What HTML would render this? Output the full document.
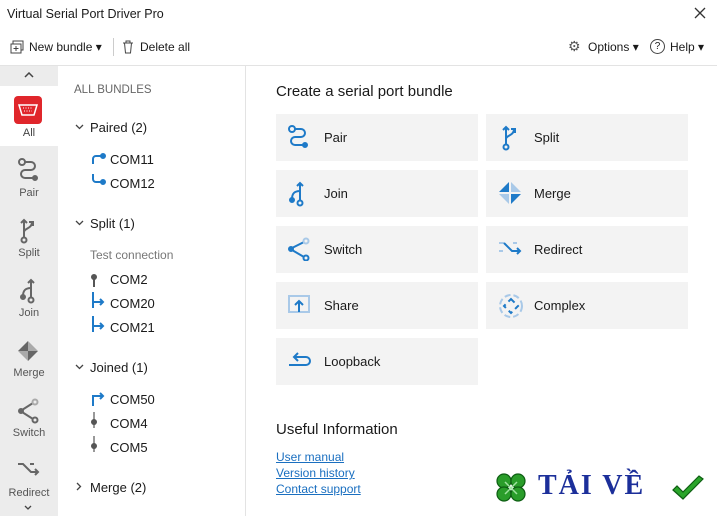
<!DOCTYPE html><html><head><meta charset="utf-8"><style>
*{margin:0;padding:0;box-sizing:border-box}
body{width:717px;height:516px;overflow:hidden;background:#fff;font-family:"Liberation Sans",sans-serif;color:#1a1a1a;position:relative;font-size:13px}
.a{position:absolute;white-space:nowrap}
.tile{position:absolute;width:202px;height:47px;background:#f3f3f3}
.tile span{position:absolute;left:48px;top:16px;font-size:13px}
.tile svg{position:absolute;left:12px;top:11px}
.side{position:absolute;left:0;width:58px;text-align:center;font-size:11px;color:#555}
.com{font-size:13px}
a{color:#1a6fc0;text-decoration:underline}
.chev{position:absolute}
</style></head><body>
<div class="a" style="left:7px;top:7px;font-size:12.5px">Virtual Serial Port Driver Pro</div>
<svg class="a" style="left:694px;top:7px" width="12" height="12" stroke="#333" stroke-width="1.3"><path d="M1 1l10 10M11 1L1 11"/></svg>
<svg class="a" style="left:10px;top:40px" width="14" height="14"><rect x="3" y="1" width="10" height="9" fill="none" stroke="#444"/><rect x="1" y="4" width="10" height="9" fill="#fff" stroke="#444"/><path d="M6 6v5M3.5 8.5h5" stroke="#444"/></svg>
<div class="a" style="left:29px;top:40px;font-size:12px">New bundle ▾</div>
<div class="a" style="left:113px;top:38px;width:1px;height:18px;background:#ccc"></div>
<svg class="a" style="left:122px;top:40px" width="12" height="14"><path d="M1 3h10M4 3V1h4v2M2.5 3l1 10h5l1-10" fill="none" stroke="#444"/></svg>
<div class="a" style="left:140px;top:40px;font-size:12px">Delete all</div>
<div class="a" style="left:568px;top:38px;font-size:14px;color:#555">⚙</div>
<div class="a" style="left:588px;top:40px;font-size:12px">Options ▾</div>
<div class="a" style="left:650px;top:39px;width:15px;height:15px;border:1px solid #444;border-radius:50%;font-size:10px;text-align:center;line-height:13px">?</div>
<div class="a" style="left:670px;top:40px;font-size:12px">Help ▾</div>
<div class="a" style="left:0;top:65px;width:717px;height:1px;background:#e3e3e3"></div>
<div class="a" style="left:0;top:66px;width:58px;height:450px;background:#ececec"></div>
<div class="a" style="left:0;top:86px;width:58px;height:60px;background:#fff"></div>
<svg class="chev" style="left:24px;top:72px" width="10" height="6" fill="none" stroke="#444" stroke-width="1.5"><path d="M1 5l4-4 4 4"/></svg>
<div class="a" style="left:14px;top:96px;width:28px;height:28px;background:#e0262b;border-radius:4px"></div>
<svg class="a" style="left:17px;top:103px" width="22" height="14"><path d="M2 2h18l-3 10H5z" fill="none" stroke="#fff" stroke-width="1.5"/><path d="M6 5h10M7 8h8" stroke="#fff" stroke-dasharray="1 1.5"/></svg>
<div class="side" style="top:127px;color:#444">All</div>
<svg class="a" style="left:17px;top:158px" width="22" height="24" fill="none" stroke="#666" stroke-width="2"><circle cx="5" cy="4" r="3"/><path d="M8 4h6a4 4 0 0 1 0 8H8a4 4 0 0 0 0 8h8"/><circle cx="18" cy="20" r="2" fill="#666"/></svg>
<div class="side" style="top:187px">Pair</div>
<svg class="a" style="left:18px;top:218px" width="22" height="26" fill="none" stroke="#666" stroke-width="2"><path d="M6 20V2M3 5l3-3 3 3M6 14c0-4 8-3 8-10M11 4h4v4"/><circle cx="6" cy="22" r="2.5"/></svg>
<div class="side" style="top:247px">Split</div>
<svg class="a" style="left:18px;top:278px" width="22" height="26" fill="none" stroke="#666" stroke-width="2"><path d="M13 20V2M10 5l3-3 3 3M13 10c-6 0-8 3-8 8"/><circle cx="13" cy="22" r="2.5"/><circle cx="5" cy="19" r="2" fill="#666"/></svg>
<div class="side" style="top:307px">Join</div>
<svg class="a" style="left:17px;top:340px" width="22" height="22"><path d="M11 1L1 11h10z" fill="#666"/><path d="M11 21l10-10H11z" fill="#666"/><path d="M11 1l10 10H11zM11 21L1 11h10z" fill="#aaa"/></svg>
<div class="side" style="top:367px">Merge</div>
<svg class="a" style="left:17px;top:398px" width="24" height="26" fill="none" stroke="#666" stroke-width="2"><circle cx="4" cy="13" r="2" fill="#666"/><path d="M5 12l11-7M5 14l11 7"/><circle cx="18" cy="4" r="2.5" stroke="#aaa"/><circle cx="18" cy="22" r="2.5"/></svg>
<div class="side" style="top:427px">Switch</div>
<svg class="a" style="left:17px;top:460px" width="24" height="16" fill="none" stroke="#666" stroke-width="2"><path d="M1 4h5l8 8h7M18 9l3 3-3 3M13 4h4"/></svg>
<div class="side" style="top:487px">Redirect</div>
<svg class="chev" style="left:24px;top:505px" width="8" height="5" fill="none" stroke="#444" stroke-width="1.3"><path d="M1 1l3 3 3-3"/></svg>
<div class="a" style="left:245px;top:66px;width:1px;height:450px;background:#e3e3e3"></div>
<div class="a" style="left:74px;top:84px;font-size:11.5px;color:#666">ALL BUNDLES</div>
<svg class="chev" style="left:75px;top:124px" width="9" height="6" fill="none" stroke="#444" stroke-width="1.3"><path d="M1 1l3.5 3.5L8 1"/></svg><div class="a" style="left:90px;top:120px">Paired (2)</div>
<svg class="a" style="left:92px;top:152px" width="14" height="12" fill="none" stroke="#1e7ac8" stroke-width="2"><path d="M1 12V7a3 3 0 0 1 3-3h8"/><circle cx="11" cy="4" r="2" fill="#1e7ac8"/></svg><div class="a com" style="left:110px;top:152px">COM11</div>
<svg class="a" style="left:92px;top:174px" width="14" height="12" fill="none" stroke="#1e7ac8" stroke-width="2"><path d="M1 0v5a3 3 0 0 0 3 3h8"/><circle cx="11" cy="8" r="2" fill="#1e7ac8"/></svg><div class="a com" style="left:110px;top:176px">COM12</div>
<svg class="chev" style="left:75px;top:220px" width="9" height="6" fill="none" stroke="#444" stroke-width="1.3"><path d="M1 1l3.5 3.5L8 1"/></svg><div class="a" style="left:90px;top:216px">Split (1)</div>
<div class="a" style="left:90px;top:248px;font-size:12px;color:#777">Test connection</div>
<svg class="a" style="left:90px;top:273px" width="10" height="14"><circle cx="4" cy="4" r="3" fill="#555"/><path d="M4 6v8" stroke="#555" stroke-width="2"/></svg><div class="a com" style="left:110px;top:272px">COM2</div>
<svg class="a" style="left:92px;top:292px" width="14" height="16" fill="none" stroke="#1e7ac8" stroke-width="2"><path d="M1 0v16M1 10h10M8 7l3 3-3 3"/></svg><div class="a com" style="left:110px;top:296px">COM20</div>
<svg class="a" style="left:92px;top:316px" width="14" height="16" fill="none" stroke="#1e7ac8" stroke-width="2"><path d="M1 0v16M1 10h10M8 7l3 3-3 3"/></svg><div class="a com" style="left:110px;top:320px">COM21</div>
<svg class="chev" style="left:75px;top:364px" width="9" height="6" fill="none" stroke="#444" stroke-width="1.3"><path d="M1 1l3.5 3.5L8 1"/></svg><div class="a" style="left:90px;top:360px">Joined (1)</div>
<svg class="a" style="left:92px;top:390px" width="14" height="16" fill="none" stroke="#1e7ac8" stroke-width="2"><path d="M1 16V6h10M8 3l3 3-3 3"/></svg><div class="a com" style="left:110px;top:392px">COM50</div>
<svg class="a" style="left:90px;top:412px" width="10" height="16"><path d="M4 0v16" stroke="#999" stroke-width="2"/><circle cx="4" cy="10" r="3" fill="#555"/></svg><div class="a com" style="left:110px;top:416px">COM4</div>
<svg class="a" style="left:90px;top:436px" width="10" height="16"><path d="M4 0v16" stroke="#999" stroke-width="2"/><circle cx="4" cy="10" r="3" fill="#555"/></svg><div class="a com" style="left:110px;top:440px">COM5</div>
<svg class="chev" style="left:76px;top:482px" width="6" height="9" fill="none" stroke="#444" stroke-width="1.3"><path d="M1 1l3.5 3.5L1 8"/></svg><div class="a" style="left:90px;top:480px">Merge (2)</div>
<div class="a" style="left:276px;top:83px;font-size:15px">Create a serial port bundle</div>
<div class="tile" style="left:276px;top:114px"><svg width="24" height="24" fill="none" stroke="#1e7ac8" stroke-width="2"><circle cx="4" cy="4" r="3"/><path d="M7 4h6a4 4 0 0 1 0 8H7a4 4 0 0 0 0 8h9"/><circle cx="17" cy="20" r="2" fill="#1e7ac8"/></svg><span>Pair</span></div>
<div class="tile" style="left:486px;top:114px"><svg width="24" height="26" fill="none" stroke="#1e7ac8" stroke-width="2"><path d="M8 20V2M5 5l3-3 3 3M8 14c0-4 8-3 8-10M13 4h4v4"/><circle cx="8" cy="22" r="2.5"/></svg><span>Split</span></div>
<div class="tile" style="left:276px;top:170px"><svg width="24" height="26" fill="none" stroke="#1e7ac8" stroke-width="2"><path d="M12 19V2M9 5l3-3 3 3M12 10c-6 0-8 3-8 8"/><circle cx="12" cy="22" r="2.5"/><circle cx="4" cy="19" r="2" fill="#1e7ac8"/></svg><span>Join</span></div>
<div class="tile" style="left:486px;top:170px"><svg width="24" height="24"><path d="M11 1L1 11h10zM13 23l10-10H13z" fill="#1e7ac8"/><path d="M13 1l10 10H13zM11 23L1 13h10z" fill="#a9c9e8"/></svg><span>Merge</span></div>
<div class="tile" style="left:276px;top:226px"><svg width="24" height="24" fill="none" stroke="#1e7ac8" stroke-width="2"><circle cx="3" cy="12" r="2" fill="#1e7ac8"/><path d="M4 11l12-6M4 13l12 7"/><circle cx="18" cy="4" r="2.5" stroke="#a9c9e8"/><circle cx="18" cy="21" r="2.5"/></svg><span>Switch</span></div>
<div class="tile" style="left:486px;top:226px"><svg width="24" height="20" fill="none" stroke-width="2"><path d="M1 6h5M15 6h4" stroke="#a9c9e8"/><path d="M6 6l8 8h8M19 11l3 3-3 3" stroke="#1e7ac8"/><path d="M1 14h4" stroke="#a9c9e8"/></svg><span>Redirect</span></div>
<div class="tile" style="left:276px;top:282px"><svg width="24" height="22" fill="none" stroke-width="2"><rect x="1" y="3" width="20" height="16" stroke="#a9c9e8"/><path d="M11 19V8M7 12l4-4 4 4" stroke="#1e7ac8"/></svg><span>Share</span></div>
<div class="tile" style="left:486px;top:282px"><svg width="26" height="26" fill="none" stroke-width="2"><circle cx="13" cy="13" r="11" stroke="#a9c9e8" stroke-dasharray="6 3"/><path d="M13 6l7 7-7 7-7-7z" stroke="#1e7ac8" stroke-dasharray="5 4"/></svg><span>Complex</span></div>
<div class="tile" style="left:276px;top:338px"><svg width="24" height="20" fill="none" stroke="#1e7ac8" stroke-width="2"><path d="M1 16h17a4 4 0 0 0 0-8H7M10 4L6 8l4 4"/></svg><span>Loopback</span></div>
<div class="a" style="left:276px;top:421px;font-size:15px">Useful Information</div>
<a class="a" style="left:276px;top:450px;font-size:12px">User manual</a>
<a class="a" style="left:276px;top:466px;font-size:12px">Version history</a>
<a class="a" style="left:276px;top:482px;font-size:12px">Contact support</a>
<svg class="a" style="left:492px;top:470px" width="38" height="36"><g fill="#2a9d2a" stroke="#0d5e12" stroke-width="1.2"><circle cx="12" cy="11" r="7"/><circle cx="26" cy="11" r="7"/><circle cx="12" cy="24" r="7"/><circle cx="26" cy="24" r="7"/></g><path d="M19 18l-6-6M19 18l6-6M19 18l-6 6M19 18l6 6" stroke="#9fe39f" stroke-width="1.5"/></svg>
<div class="a" style="left:538px;top:470px;font-size:28px;letter-spacing:2px;font-weight:bold;font-family:'Liberation Serif',serif;color:#1c2f9a">TẢI VỀ</div>
<svg class="a" style="left:670px;top:475px" width="36" height="28"><path d="M3 15l10 9L33 4l-4-3L13 17l-6-6z" fill="#2aa52a" stroke="#0d5e12" stroke-width="1.2"/></svg>
</body></html>
